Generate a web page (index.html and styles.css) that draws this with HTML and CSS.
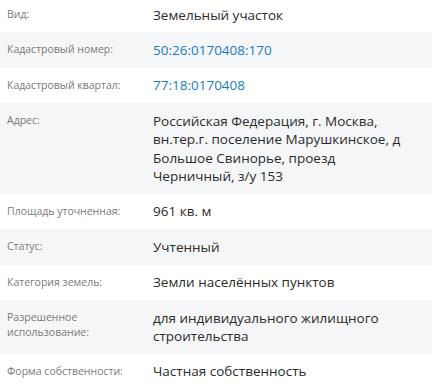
FILE: index.html
```html
<!DOCTYPE html>
<html lang="ru">

<head>
    <meta charset="UTF-8">
    <meta name="viewport" content="width=device-width, initial-scale=1.0">
    <title>Сведения об объекте</title>
    <link rel="stylesheet" href="styles.css">
</head>

<body>
    <div class="info-table">
        <div class="info-row">
            <div class="info-label">Вид:</div>
            <div class="info-value">Земельный участок</div>
        </div>
        <div class="info-row">
            <div class="info-label">Кадастровый номер:</div>
            <div class="info-value"><a href="#">50:26:0170408:170</a></div>
        </div>
        <div class="info-row">
            <div class="info-label">Кадастровый квартал:</div>
            <div class="info-value"><a href="#">77:18:0170408</a></div>
        </div>
        <div class="info-row">
            <div class="info-label">Адрес:</div>
            <div class="info-value">Российская Федерация, г. Москва, вн.тер.г. поселение Марушкинское, д Большое Свинорье, проезд Черничный, з/у 153</div>
        </div>
        <div class="info-row">
            <div class="info-label">Площадь уточненная:</div>
            <div class="info-value">961 кв. м</div>
        </div>
        <div class="info-row">
            <div class="info-label">Статус:</div>
            <div class="info-value">Учтенный</div>
        </div>
        <div class="info-row">
            <div class="info-label">Категория земель:</div>
            <div class="info-value">Земли населённых пунктов</div>
        </div>
        <div class="info-row">
            <div class="info-label">Разрешенное использование:</div>
            <div class="info-value">для индивидуального жилищного строительства</div>
        </div>
        <div class="info-row">
            <div class="info-label">Форма собственности:</div>
            <div class="info-value">Частная собственность</div>
        </div>
    </div>
</body>

</html>
```

FILE: styles.css
```css
* {
    box-sizing: border-box;
    margin: 0;
    padding: 0;
}

body {
    font-family: 'Open Sans', 'Noto Sans', sans-serif;
    background-color: #fff;
    color: #333;
    overflow: hidden;
}

.info-table {
    margin-top: -3px;
}

.info-row {
    display: grid;
    grid-template-columns: 146px 1fr;
    padding: 8.5px 12px 8.5px 7px;
}

.info-row:nth-child(even) {
    background-color: #f5f6f8;
}

.info-label {
    font-size: 10.5px;
    line-height: 15px;
    padding-top: 1.5px;
    padding-right: 10px;
    color: #7a7a7a;
}

.info-value {
    font-size: 13.5px;
    line-height: 18.4px;
    color: #2b2b2b;
}

.info-value a {
    color: #1a7cc1;
    text-decoration: none;
}
```
